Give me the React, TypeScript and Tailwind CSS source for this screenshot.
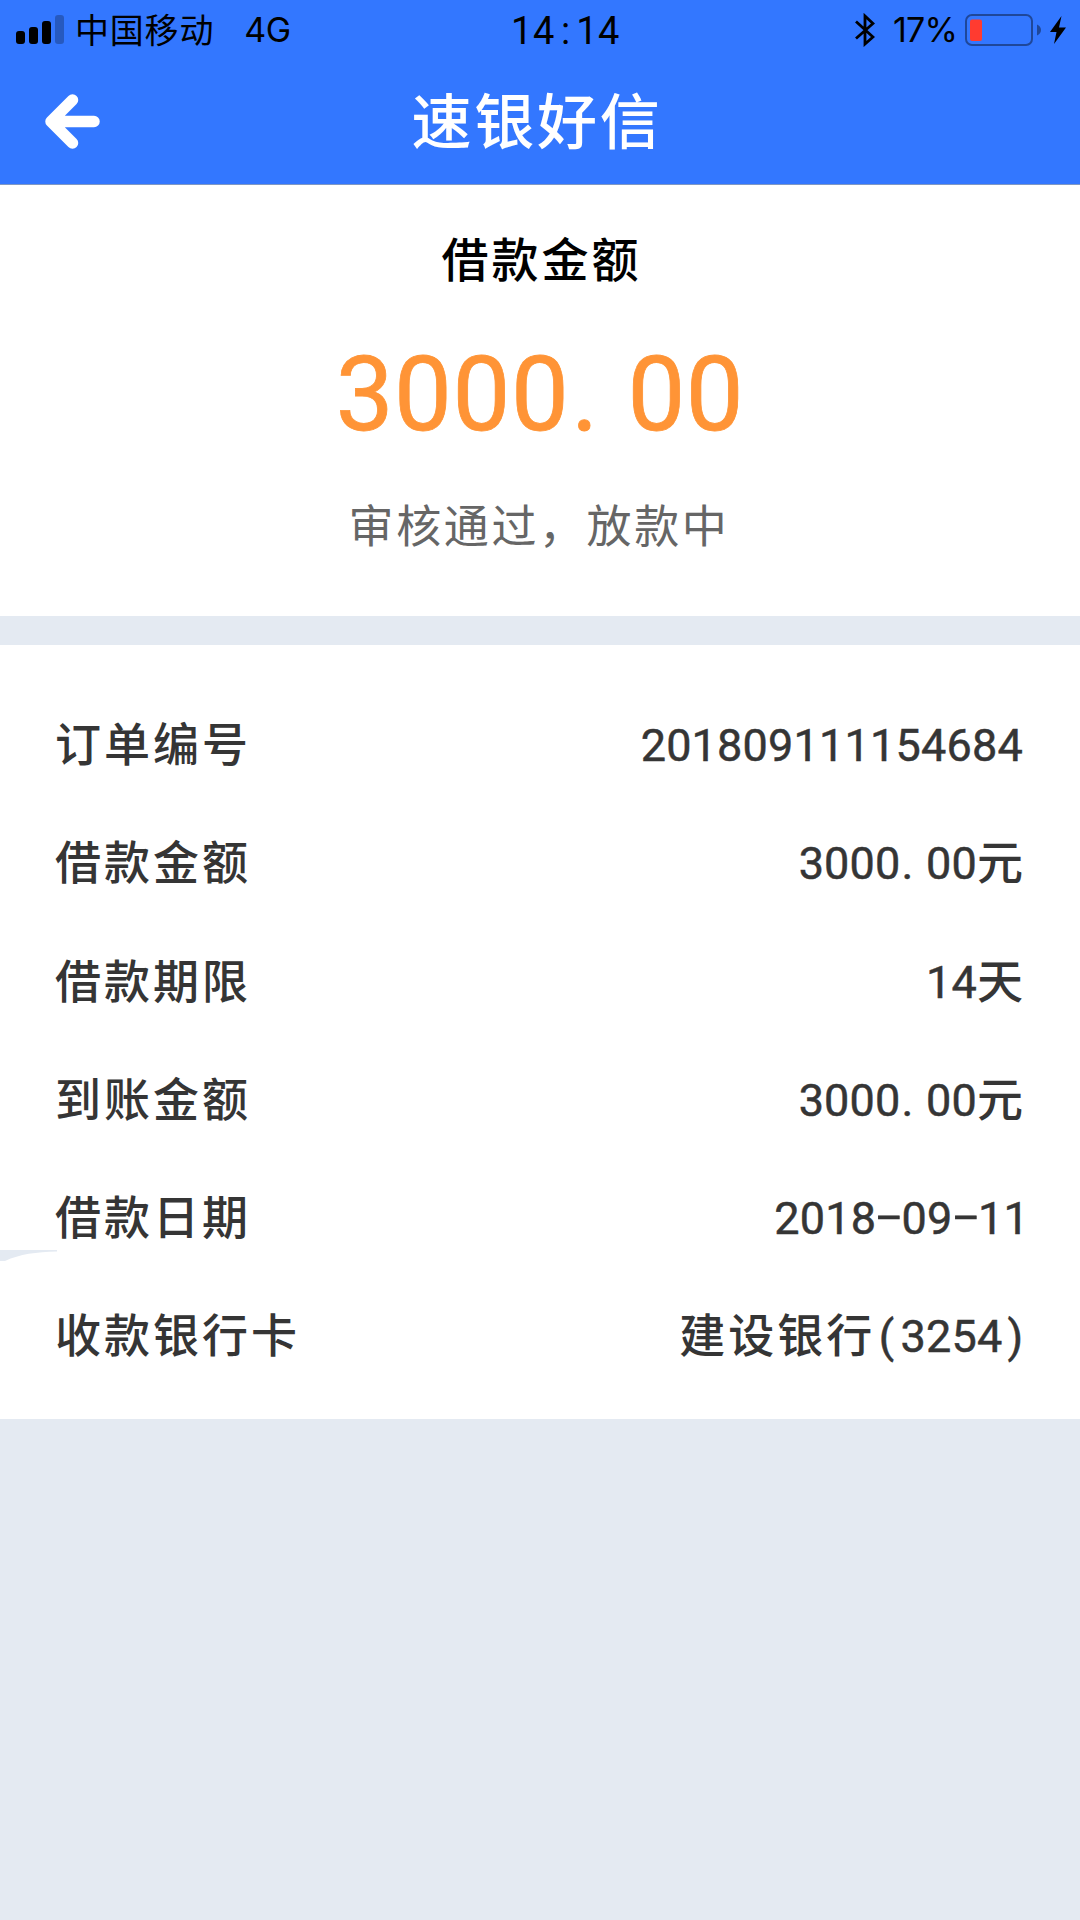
import { Fragment } from "react";

const CJK = "font-['Noto_Sans_CJK_SC',sans-serif]";

const details = [
  { label: "订单编号", value: "201809111154684" },
  { label: "借款金额", value: "3000.00", unit: "元" },
  { label: "借款期限", value: "14", unit: "天" },
  { label: "到账金额", value: "3000.00", unit: "元" },
  { label: "借款日期", value: "2018-09-11", shift: "-mr-[6px]" },
  { label: "收款银行卡", prefix: "建设银行", value: "(3254)", shift: "-mr-[5px]" },
];

// Digits are already tabular, punctuation gets a half-width cell of its own
const cells: Record<string, string> = {
  "-": "inline-block w-[0.565em] -translate-y-[4px] scale-x-[1.8] text-center font-['Noto_Sans_CJK_SC',sans-serif] leading-none tracking-normal",
  ".": "inline-block w-[0.565em] pl-[0.02em] text-left tracking-normal",
  ":": "inline-block w-[0.565em] text-center tracking-normal",
  "(": "inline-block w-[0.565em] pr-[0.06em] text-center tracking-normal",
  ")": "inline-block w-[0.565em] text-center tracking-normal",
};

function Mono({ text }: { text: string }) {
  return (
    <span className="font-['Roboto',sans-serif] font-normal">
      {text.split(/([.:()-])/).map((part, i) =>
        cells[part] ? (
          <span key={i} className={cells[part]}>
            {part}
          </span>
        ) : (
          <Fragment key={i}>{part}</Fragment>
        ),
      )}
    </span>
  );
}

function SignalIcon() {
  return (
    <svg viewBox="0 0 48 29" className="h-[29px] w-[48px]">
      <rect x="0" y="16" width="9" height="13" rx="3" />
      <rect x="13" y="12" width="9" height="17" rx="3" />
      <rect x="26" y="6" width="9" height="23" rx="3" />
      <rect x="39" y="0" width="9" height="29" rx="3" opacity="0.25" />
    </svg>
  );
}

function BluetoothIcon() {
  return (
    <svg viewBox="0 0 20 34" className="h-[34px] w-[20px]" fill="none" stroke="#000" strokeWidth="2.800">
      <path d="M1 8.500 18 24 10 31V3l8 7.500L1 25.500" />
    </svg>
  );
}

function BatteryIcon() {
  return (
    <svg viewBox="0 0 76 32" className="h-[32px] w-[76px]">
      <rect x="1" y="1" width="66" height="30" rx="6" fill="none" stroke="#1f4799" strokeWidth="2" />
      <rect x="5" y="5.500" width="12" height="21.500" rx="2" fill="#ff3b30" />
      <path d="M72 10.500c2.500 1 4 3 4 5.500s-1.500 4.500-4 5.500z" fill="#1f4799" />
    </svg>
  );
}

function BoltIcon() {
  return (
    <svg viewBox="0 0 16 28" className="h-[28px] w-[16px]">
      <path d="M11.500 0 0 16h6.500L4 28 16 11.500H9z" />
    </svg>
  );
}

function StatusBar() {
  return (
    <div className="flex h-[60px] items-center text-black">
      <div className="flex flex-1 items-center pb-[2px] pl-4">
        <SignalIcon />
        <span className="ml-[11px] text-[34px] leading-[58px] tracking-[0.800px]">中国移动</span>
        <span className="ml-[30px] pt-[2px] font-['Inter',sans-serif] text-[34px] leading-[58px] tracking-[-0.500px]">4G</span>
      </div>
      <div className="pb-[2px] pl-[49px] text-[38px] leading-[58px] tracking-[0.500px]">
        <Mono text="14:14" />
      </div>
      <div className="flex flex-1 items-center justify-end pr-[14px]">
        <BluetoothIcon />
        <span className="ml-[18px] font-['Inter',sans-serif] text-[34px] leading-[60px] tracking-[-0.800px]">17%</span>
        <span className="ml-[8px] flex items-center">
          <BatteryIcon />
        </span>
        <span className="ml-[9px] flex items-center">
          <BoltIcon />
        </span>
      </div>
    </div>
  );
}

function Header() {
  return (
    <header className="h-[185px] border-b border-[#7f98c4] bg-[#3377ff]">
      <StatusBar />
      <div className="flex h-[122px] items-center">
        <button aria-label="返回" className="ml-[45px] w-[55px]">
          <svg viewBox="0 0 55 55" className="h-[55px] w-[55px]" fill="none" stroke="#fff" strokeWidth="11.500" strokeLinecap="round" strokeLinejoin="round">
            <path d="M27.500 6 6 27.500 27.500 49M12 27.500h37" />
          </svg>
        </button>
        <h1 className="flex-1 pb-[7px] pr-[106px] text-center text-[60px] font-medium leading-[115px] tracking-[2.800px] text-white">
          速银好信
        </h1>
      </div>
    </header>
  );
}

export default function App() {
  return (
    <div className={`${CJK} h-[1920px] w-[1080px] overflow-hidden bg-[#e4eaf2]`}>
      <Header />
      <section className="flex h-[431px] flex-col items-center bg-white pt-[37px]">
        <h2 className="pl-[3px] text-[47px] font-medium leading-[70px] tracking-[3px] text-black">借款金额</h2>
        <p className="mt-[29px] text-[103px] leading-[130px] tracking-[0.500px] text-[#ff9436] [-webkit-text-stroke:0.8px_#ff9436]">
          <Mono text="3000.00" />
        </p>
        <p className="mt-[29px] pr-[2px] text-[45px] leading-[70px] tracking-[2.600px] text-[#666]">审核通过，放款中</p>
      </section>
      <section className="relative mt-[29px] h-[774px] bg-white pt-[37px]">
        {/* sliver of page background showing at the card edge */}
        <svg viewBox="0 0 57 11" className="absolute left-0 top-[605px] h-[11px] w-[57px]">
          <path d="M0 0h57v1.500C36 2 20 4 5 11H0z" fill="#e4eaf2" />
        </svg>
        {details.map(({ label, prefix, value, unit, shift }) => (
          <div
            key={label}
            className="flex h-[118.300px] items-baseline justify-between pl-[55px] pr-[57px] text-[46px] font-medium leading-[118px] text-[#353535]"
          >
            <span className="tracking-[3px]">{label}</span>
            <span className={`flex items-baseline ${shift ?? ""}`}>
              {prefix && <span className="tracking-[3px]">{prefix}</span>}
              <span className="text-[45px] tracking-[0.200px] [-webkit-text-stroke:0.5px_#353535]">
                <Mono text={value} />
              </span>
              {unit && <span>{unit}</span>}
            </span>
          </div>
        ))}
      </section>
    </div>
  );
}
